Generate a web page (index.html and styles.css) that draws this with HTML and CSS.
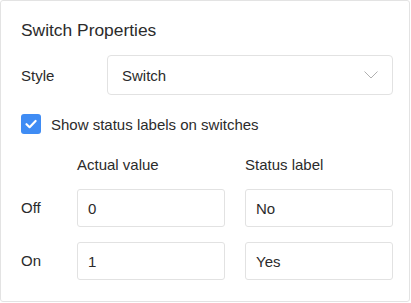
FILE: index.html
```html
<!DOCTYPE html>
<html>
<head>
<meta charset="utf-8">
<link rel="stylesheet" href="styles.css">
</head>
<body>
<div class="panel">
  <h1 class="title">Switch Properties</h1>
  <div class="style-row">
    <span class="label">Style</span>
    <div class="select">
      <span>Switch</span>
      <svg class="chevron" width="14" height="8" viewBox="0 0 14 8"><path d="M0.5 0.5 L7 7 L13.5 0.5" fill="none" stroke="#b0b0b0" stroke-width="1"/></svg>
    </div>
  </div>
  <label class="check-row">
    <span class="checkbox"><svg width="20" height="20" viewBox="0 0 20 20"><path d="M5.5 10.2 L8.6 13.2 L14.6 7" fill="none" stroke="#fff" stroke-width="2.2" stroke-linecap="round" stroke-linejoin="round"/></svg></span>
    <span>Show status labels on switches</span>
  </label>
  <div class="grid">
    <span></span>
    <span class="head">Actual value</span>
    <span class="head">Status label</span>
    <span class="label">Off</span>
    <div class="input">0</div>
    <div class="input">No</div>
    <span class="label">On</span>
    <div class="input">1</div>
    <div class="input">Yes</div>
  </div>
</div>
</body>
</html>
```
FILE: styles.css
```css
* { box-sizing: border-box; }
body {
  margin: 0;
  font-family: "Liberation Sans", Arial, sans-serif;
  color: #2b2b2b;
  background: #fff;
}
.panel {
  width: 410px;
  height: 302px;
  border: 1px solid #e3e3e3;
  border-radius: 3px;
  padding: 19px 16px 0 20px;
}
.title {
  margin: 0;
  font-size: 17.4px;
  font-weight: normal;
  line-height: 20px;
}
.style-row {
  display: flex;
  align-items: center;
  margin-top: 15px;
}
.label {
  font-size: 15px;
}
.style-row .label {
  width: 86px;
}
.select {
  flex: 1;
  height: 40px;
  border: 1px solid #e2e2e2;
  border-radius: 4px;
  display: flex;
  align-items: center;
  justify-content: space-between;
  padding: 0 14px 0 14px;
  font-size: 15px;
}
.check-row {
  display: flex;
  align-items: center;
  gap: 10px;
  margin-top: 19px;
  font-size: 15px;
  height: 20px;
}
.checkbox {
  width: 20px;
  height: 20px;
  border-radius: 3px;
  background: #3f8cf4;
  display: block;
}
.checkbox svg { display: block; }
.grid {
  display: grid;
  grid-template-columns: 36px 148px 148px;
  grid-template-rows: 18px 38px 38px;
  column-gap: 20px;
  row-gap: 15px;
  align-items: center;
  margin-top: 22px;
}
.grid .head {
  font-size: 15px;
  line-height: 18px;
}
.grid .label {
  line-height: 18px;
}
.input {
  height: 38px;
  border: 1px solid #e2e2e2;
  border-radius: 3px;
  padding: 0 10px;
  display: flex;
  align-items: center;
  font-size: 15px;
}
```
